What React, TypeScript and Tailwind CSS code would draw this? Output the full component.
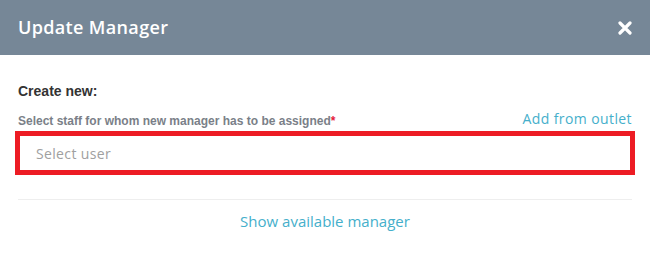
export default function App() {
  return (
    <div className="w-[650px] h-[262px] bg-white overflow-hidden">
      <header className="h-[55px] bg-[#768797] flex items-center justify-between pl-[18px] pr-[18px]">
        <h2 className="text-white text-[18px] font-semibold font-['Open_Sans',sans-serif] tracking-[0.35px]">
          Update Manager
        </h2>
        <button className="text-white">
          <svg width="14" height="14" viewBox="0 0 14 14">
            <path d="M2 2 L12 12 M12 2 L2 12" stroke="white" strokeWidth="3.2" strokeLinecap="round" />
          </svg>
        </button>
      </header>

      <div className="px-[18px] pt-[28px]">
        <p className="text-[14px] font-bold text-[#333] font-['Liberation_Sans',sans-serif] leading-[16px]">
          Create new:
        </p>

        <div className="flex items-end justify-between mt-[11px]">
          <label className="text-[12px] font-bold text-[#7a7f88] font-['Liberation_Sans',sans-serif] leading-[14px]">
            Select staff for whom new manager has to be assigned
            <span className="text-[#e5203a]">*</span>
          </label>
          <a className="text-[14px] text-[#45afcb] font-['Open_Sans',sans-serif] leading-[18px] tracking-[0.4px]">
            Add from outlet
          </a>
        </div>

        <div className="-mx-[3px] mt-[3px] h-[44px] border-[5px] border-[#ed1c24] flex items-center pl-[16px]">
          <span className="text-[14px] text-[#a0a0a0] font-['Open_Sans',sans-serif] tracking-[0.35px]">
            Select user
          </span>
        </div>

        <div className="mt-[24px] border-t border-[#eeeeee]" />

        <div className="flex justify-center pt-[11px]">
          <a className="text-[15px] text-[#45afcb] font-['Open_Sans',sans-serif] leading-[20px]">
            Show available manager
          </a>
        </div>
      </div>
    </div>
  );
}
